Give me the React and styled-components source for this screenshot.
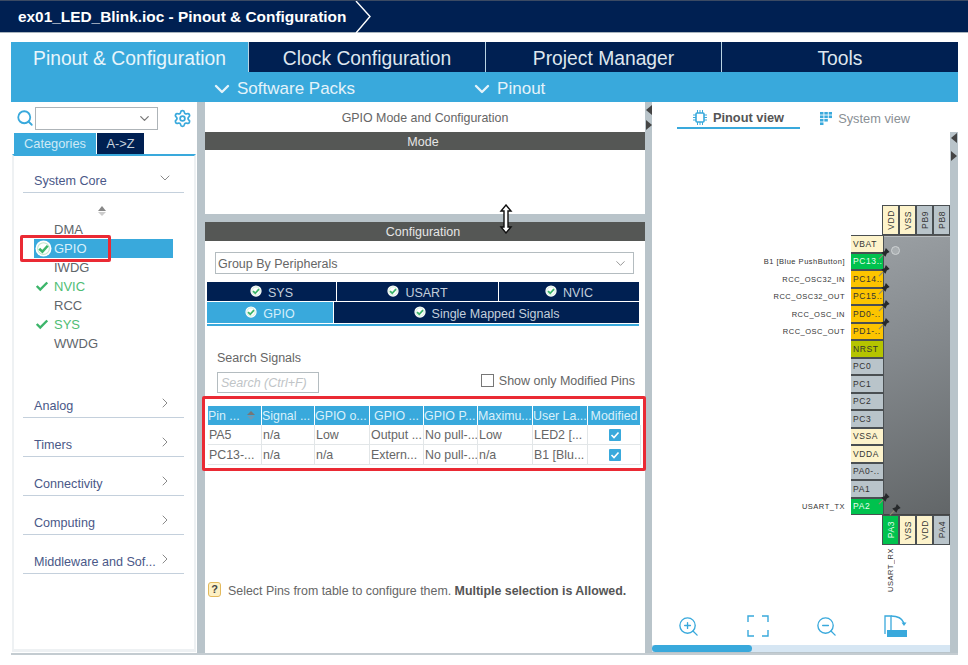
import * as React from 'react'
import styled, { createGlobalStyle } from 'styled-components'
import { ChevronDown, ChevronRight, Search, Settings, ZoomIn, ZoomOut } from 'lucide-react'

const Global = createGlobalStyle`
  html, body { margin: 0; padding: 0; background: #fff; }
  * { box-sizing: border-box; }
`

const NAVY = '#002052'
const BLUE = '#39a9dc'
const SASH = '#b9c4ca'
const GREY_TEXT = '#5f666b'

const Page = styled.div`
  position: relative;
  width: 968px;
  height: 665px;
  overflow: hidden;
  background: #fff;
  font-family: 'Liberation Sans', Arial, sans-serif;
`

const TitleBar = styled.div`
  display: flex;
  align-items: center;
  height: 33px;
  padding-left: 18px;
  background: ${NAVY};
  border-top: 1px solid #3b4a63;
  border-bottom: 1px solid #a9b4bd;
  color: #fff;
  font-size: 15.4px;
  font-weight: 700;
`

const TitleArrow = styled.svg`
  margin-left: 9px;
  width: 18px;
  height: 32px;
  flex: none;
`

const Workspace = styled.div`
  padding: 9px 10px 0 11px;
`

const MainTabs = styled.div`
  display: grid;
  grid-template-columns: 237px 237px 236px 237px;
  height: 30px;
  background: ${BLUE};
`

const MainTab = styled.div`
  display: flex;
  align-items: center;
  justify-content: center;
  padding-top: 3px;
  background: ${(p) => (p.$active ? BLUE : NAVY)};
  border-left: ${(p) => (p.$active ? '0' : `1px solid #b9d3e2`)};
  color: ${(p) => (p.$active ? '#e8f5fb' : '#dfe6ee')};
  font-size: 19.3px;
`

const SubBar = styled.div`
  display: flex;
  align-items: center;
  height: 30px;
  padding: 4px 0 0 199px;
  background: ${BLUE};
  color: #e4f3fa;
  font-size: 17px;
`

const SubItem = styled.div`
  display: flex;
  align-items: center;
  gap: 3px;
  margin-right: ${(p) => p.$gap || 0}px;
`

const Columns = styled.div`
  display: grid;
  grid-template-columns: 186px 8px 440px 7px 298px 8px;
  height: 551px;
`

const Sash = styled.div`
  position: relative;
  margin-top: ${(p) => p.$inset || 0}px;
  background: ${SASH};
`

const SashArrow = styled.span`
  position: absolute;
  left: 1px;
  top: ${(p) => p.$top}px;
  width: 0;
  height: 0;
  border-top: 5px solid transparent;
  border-bottom: 5px solid transparent;
  ${(p) => (p.$right ? 'border-left: 6px solid #444;' : 'border-right: 6px solid #444;')}
`

const Left = styled.div`
  display: flex;
  flex-direction: column;
  height: 551px;
`

const FilterRow = styled.div`
  display: flex;
  align-items: center;
  height: 31px;
  padding: 1px 0 0 5px;
  color: ${BLUE};
`

const FilterBox = styled.div`
  display: flex;
  align-items: center;
  justify-content: flex-end;
  width: 123px;
  height: 23px;
  margin: 0 15px 0 1px;
  padding-right: 5px;
  border: 1px solid #aeb4b8;
  color: #777;
`

const CatTabs = styled.div`
  display: flex;
  height: 21px;
  padding-left: 3px;
  gap: 1px;
`

const CatTab = styled.div`
  display: flex;
  align-items: center;
  justify-content: center;
  width: ${(p) => p.$w}px;
  background: ${(p) => (p.$active ? BLUE : NAVY)};
  color: ${(p) => (p.$active ? '#cfeaf6' : '#c8d2de')};
  font-size: 12.8px;
`

const CatPanel = styled.div`
  flex: 1;
  margin: 0 3px 1px 1px;
  padding: 0 10px 0 9px;
  border-top: 2px solid ${BLUE};
  border-left: 2px solid #eef1f3;
  border-right: 2px solid #eef1f3;
  border-bottom: 3px solid #eef1f3;
  width: 184px;
`

const Category = styled.div`
  display: flex;
  align-items: center;
  justify-content: space-between;
  height: 20px;
  margin-top: ${(p) => p.$top}px;
  padding: 0 11px 4px 11px;
  width: 161px;
  border-bottom: 1px solid #c4d0dc;
  color: #4a5888;
  font-size: 12.6px;
  white-space: nowrap;

  svg { color: #777; transform: translateY(-3px); flex: none; }
`

const ScrollMark = styled.div`
  display: flex;
  flex-direction: column;
  align-items: center;
  gap: 1px;
  width: 158px;
  margin-top: 13px;
  height: 12px;

  &::before, &::after {
    content: '';
    width: 0;
    height: 0;
    border-left: 4px solid transparent;
    border-right: 4px solid transparent;
  }
  &::before { border-bottom: 5px solid #888; }
  &::after { border-top: 4px solid #ccc; }
`

const PeriphList = styled.div`
  margin: 2px 0 45px 11px;
`

const Periph = styled.div`
  position: relative;
  display: flex;
  align-items: center;
  height: 19px;
  width: 139px;
  padding-left: 20px;
  background: ${(p) => (p.$selected ? BLUE : 'transparent')};
  color: ${(p) => (p.$selected ? '#d8f0fa' : p.$ok ? '#4fbd74' : GREY_TEXT)};
  font-size: 13px;
`

const PeriphCheck = styled.svg`
  position: absolute;
  left: 1px;
  top: 2px;
  width: 14px;
  height: 14px;
`

const PeriphDisc = styled.svg`
  position: absolute;
  left: 1px;
  top: 1px;
  width: 17px;
  height: 17px;
`

const Middle = styled.div`
  display: flex;
  flex-direction: column;
  height: 551px;
`

const MidTitle = styled.div`
  display: flex;
  align-items: center;
  justify-content: center;
  height: 30px;
  padding-top: 2px;
  color: #666;
  font-size: 12.4px;
`

const SectionBar = styled.div`
  display: flex;
  align-items: center;
  justify-content: center;
  height: ${(p) => p.$h}px;
  padding: 1px 4px 0 0;
  background: #555755;
  color: #e6e6e6;
  font-size: 12.5px;
`

const ModeBody = styled.div`
  height: 64px;
`

const Gap = styled.div`
  height: 8px;
  background: ${SASH};
`

const ConfigBody = styled.div`
  flex: 1;
  padding: 11px 0 0 0;
`

const GroupSelect = styled.div`
  display: flex;
  align-items: center;
  justify-content: space-between;
  height: 22px;
  width: 419px;
  margin-left: 10px;
  padding: 1px 5px 0 2px;
  border: 1px solid #b4bcc0;
  color: #666;
  font-size: 12.5px;

  svg { color: #888; }
`

const PeriphTabs = styled.div`
  margin: 8px 0 0 2px;
  width: 432px;
  border-bottom: 2px solid ${BLUE};
`

const PeriphTabRow = styled.div`
  display: grid;
  grid-template-columns: ${(p) => p.$cols};
  gap: 1px;
  height: ${(p) => p.$h}px;
  margin-bottom: 1px;
`

const PeriphTab = styled.div`
  display: flex;
  align-items: center;
  justify-content: center;
  gap: 6px;
  padding-top: 3px;
  background: ${(p) => (p.$active ? BLUE : NAVY)};
  color: ${(p) => (p.$active ? '#d4eefa' : '#c3cfdc')};
  font-size: 12.5px;
`

const TabCheck = styled.svg`
  width: 12px;
  height: 12px;
  margin-top: -5px;
`

const SearchSignals = styled.div`
  margin: 25px 0 0 12px;
  color: #666;
  font-size: 12.5px;
`

const SearchLine = styled.div`
  display: flex;
  align-items: center;
  justify-content: space-between;
  margin: 7px 10px 0 12px;
  height: 21px;
`

const SearchInput = styled.div`
  display: flex;
  align-items: center;
  width: 102px;
  height: 21px;
  padding: 1px 0 0 3px;
  border: 1px solid #b4bcc0;
  color: #c0c4c7;
  font-size: 12.5px;
  font-style: italic;
`

const ModifiedToggle = styled.label`
  display: flex;
  align-items: center;
  gap: 5px;
  margin-top: -4px;
  color: #666;
  font-size: 12.5px;
`

const CheckBox = styled.span`
  width: 13px;
  height: 13px;
  border: 1px solid #777;
  background: #fff;
`

const Table = styled.div`
  margin: 13px 0 0 3px;
  width: 433px;
`

const TableRow = styled.div`
  display: grid;
  grid-template-columns: 54px 53px 55px 54px 54px 55px 55px 53px;
  height: ${(p) => p.$h}px;
  border-bottom: ${(p) => (p.$head ? '0' : '1px solid #e2e6e8')};
`

const HeadCell = styled.div`
  display: flex;
  align-items: center;
  justify-content: ${(p) => (p.$center ? 'center' : 'flex-start')};
  margin-right: 1px;
  padding: 0;
  overflow: hidden;
  background: ${BLUE};
  color: #d8f0fa;
  font-size: 12.4px;
  white-space: nowrap;
`

const Cell = styled.div`
  display: flex;
  align-items: center;
  justify-content: ${(p) => (p.$center ? 'center' : 'flex-start')};
  padding: 1px 0 0 1px;
  border-right: 1px solid #e2e6e8;
  color: #666;
  font-size: 12.4px;
  white-space: nowrap;
  overflow: hidden;
`

const SortMark = styled.span`
  display: inline-flex;
  flex-direction: column;
  gap: 1px;
  margin-left: 7px;

  &::before, &::after {
    content: '';
    width: 0;
    height: 0;
    border-left: 4px solid transparent;
    border-right: 4px solid transparent;
  }
  &::before { border-bottom: 4px solid #777; }
  &::after { border-top: 4px solid #6c9ab5; }
`

const TickBox = styled.span`
  display: flex;
  align-items: center;
  justify-content: center;
  width: 12px;
  height: 12px;
  background: ${BLUE};
  border-radius: 1px;
`

const Hint = styled.div`
  display: flex;
  align-items: center;
  gap: 7px;
  margin: 119px 0 0 3px;
  color: #666;
  font-size: 12.4px;

  b { color: #555; }
`

const HintIcon = styled.span`
  display: flex;
  align-items: center;
  justify-content: center;
  width: 13px;
  height: 15px;
  margin-top: -4px;
  border: 1px solid #e3b95c;
  border-radius: 3px;
  background: #fdf0c4;
  color: #444;
  font-size: 11px;
  font-weight: 700;
`

const Right = styled.div`
  display: flex;
  flex-direction: column;
  height: 551px;
`

const ViewTabs = styled.div`
  display: flex;
  align-items: flex-start;
  height: 31px;
  padding: 8px 0 0 25px;
`

const ViewTab = styled.div`
  display: flex;
  align-items: center;
  justify-content: center;
  gap: 6px;
  width: ${(p) => p.$w}px;
  height: 19px;
  padding-bottom: 2px;
  margin-right: ${(p) => p.$gap || 0}px;
  border-bottom: ${(p) => (p.$active ? `2px solid ${BLUE}` : '0')};
  color: ${(p) => (p.$active ? '#555' : '#8a9095')};
  font-size: 12.8px;
  font-weight: ${(p) => (p.$active ? 700 : 400)};
  white-space: nowrap;
`

const Canvas = styled.div`
  flex: 1;
  display: flex;
  flex-direction: column;
  align-items: flex-end;
  padding-top: 72px;
`

const ChipGrid = styled.div`
  display: grid;
  grid-template-columns: 30px 69px;
  grid-template-rows: 30px 280px 30px;
`

const TopPins = styled.div`
  grid-column: 2;
  grid-row: 1;
  display: grid;
  grid-template-columns: repeat(4, 1fr);
  padding-left: 1px;
`

const BottomPins = styled(TopPins)`
  grid-row: 3;
  position: relative;
  z-index: 1;
`

const SidePins = styled.div`
  grid-column: 1;
  grid-row: 2;
  position: relative;
  z-index: 1;
  display: grid;
  grid-auto-rows: 17.5px;
`

const Pin = styled.div`
  position: relative;
  display: flex;
  align-items: center;
  justify-content: ${(p) => (p.$vertical ? 'center' : 'flex-start')};
  padding-left: ${(p) => (p.$vertical ? 0 : 2)}px;
  background: ${(p) => p.$bg};
  border: 1px solid #4a4f52;
  border-width: ${(p) => (p.$vertical ? '1px' : '1px 1px 1px 0')};
  color: ${(p) => (p.$light ? '#e8fff0' : '#333')};
  font-size: 8.5px;
  letter-spacing: 0.6px;
  white-space: nowrap;
`

const VerticalText = styled.span`
  writing-mode: vertical-rl;
  transform: rotate(180deg);
`

const PinLabel = styled.span`
  position: absolute;
  right: calc(100% + 6px);
  top: 50%;
  transform: translateY(-50%);
  color: #333;
  font-size: 7.5px;
  letter-spacing: 0.5px;
  white-space: nowrap;
`

const PinLabelVertical = styled.span`
  position: absolute;
  left: 50%;
  top: calc(100% + 4px);
  margin-left: -5px;
  writing-mode: vertical-rl;
  transform: rotate(180deg);
  color: #333;
  font-size: 7.5px;
  letter-spacing: 0.5px;
  white-space: nowrap;
`

const ChipBody = styled.div`
  position: relative;
  grid-column: 2;
  grid-row: 2;
  background: linear-gradient(160deg, #9a9fa3 0%, #84898d 40%, #626668 100%);
  border-top: 1px solid #555;
  border-left: 1px solid #555;
  border-bottom: 1px solid #444;
  box-shadow: inset 1px 1px 0 #b9bec1;
`

const ChipDot = styled.span`
  position: absolute;
  left: 9px;
  top: 10px;
  width: 9px;
  height: 9px;
  border-radius: 50%;
  background: #a9aeb1;
  border: 1px solid #cfd3d5;
`

const PinMark = styled.svg`
  position: absolute;
  width: 13px;
  height: 13px;
  z-index: 2;
  ${(p) => (p.$bottom ? 'left: 6px; top: -13px;' : 'right: -8px; top: -7px;')}
`

const CanvasTools = styled.div`
  display: grid;
  grid-template-columns: 69px 69px 69px 69px;
  width: 100%;
  margin-top: auto;
  padding: 0 0 7px 2px;
  height: 31px;
  color: ${BLUE};
  justify-items: center;
  align-items: center;
`

const HScroll = styled.div`
  height: 8px;
  background: #d6e6f3;
  border-bottom: 1px solid ${SASH};
`

const HThumb = styled.div`
  width: 100px;
  height: 7px;
  border-radius: 4px;
  background: ${BLUE};
`

const BottomLine = styled.div`
  height: 2px;
  width: 947px;
  background: #c4ccd1;
`

const RedBox = styled.div`
  position: absolute;
  left: ${(p) => p.$x}px;
  top: ${(p) => p.$y}px;
  width: ${(p) => p.$w}px;
  height: ${(p) => p.$h}px;
  border: 3px solid #ea2a34;
  border-radius: 2px;
  pointer-events: none;
`

const ResizeCursor = styled.svg`
  position: absolute;
  left: 499px;
  top: 204px;
  width: 14px;
  height: 30px;
`

const CheckDisc = ({ as: As = TabCheck }) => (
  <As viewBox="0 0 16 16">
    <circle cx="8" cy="8" r="7.5" fill="#fff" />
    <circle cx="8" cy="8" r="5.5" fill="#fff" stroke="#bfe6cc" />
    <path d="M4 8.2l3 2.8 5-5.6" fill="none" stroke="#3cb56a" strokeWidth="2.4" />
  </As>
)

const PlainCheck = () => (
  <PeriphCheck viewBox="0 0 16 16">
    <path d="M2 8l4 4 8-8" fill="none" stroke="#3cb56a" strokeWidth="2.8" />
  </PeriphCheck>
)

const Tick = () => (
  <svg width="10" height="10" viewBox="0 0 10 10">
    <path d="M1.5 5l2.5 2.5 4.5-5" fill="none" stroke="#fff" strokeWidth="1.6" />
  </svg>
)

const Pushpin = ({ bottom }) => (
  <PinMark viewBox="0 0 14 14" $bottom={bottom}>
    <path d="M1 13l5-5" stroke="#8f8a70" strokeWidth="1.3" />
    <path d="M3.500 6l4.500 4.500 1.500-3.500 3-1.500L8.500 1 7 4.500z" fill="#26292b" />
  </PinMark>
)

const FitIcon = () => (
  <svg width="22" height="22" viewBox="0 0 22 22" fill="none" stroke="currentColor" strokeWidth="1.4">
    <path d="M1 7V1h6M15 1h6v6M21 15v6h-6M7 21H1v-6" />
  </svg>
)

const RotateIcon = () => (
  <svg width="24" height="23" viewBox="0 0 24 23" fill="none" stroke="currentColor" strokeWidth="1.3">
    <path d="M1 19V1h6v14" />
    <path d="M7 1c6 0 11 2 13 7" />
    <path d="M17.500 7.500h5L20 11z" fill="currentColor" stroke="none" />
    <rect x="3" y="15" width="20" height="7" fill="currentColor" stroke="none" />
  </svg>
)

const PinoutIcon = () => (
  <svg width="14" height="15" viewBox="0 0 14 15" fill="none" stroke={BLUE}>
    <rect x="3" y="3" width="8" height="9" rx="1" strokeWidth="1.6" />
    <path d="M4.500 0v3M7 0v3M9.500 0v3M4.500 12v3M7 12v3M9.500 12v3M0 5h3M0 7.500h3M0 10h3M11 5h3M11 7.500h3M11 10h3" strokeWidth="1" />
  </svg>
)

const SystemIcon = () => (
  <svg width="14" height="15" viewBox="0 0 14 15" fill={BLUE}>
    {[0, 5, 10].map((x) =>
      [0, 4, 8, 12].filter((y) => !(x > 0 && y > 4 + (x === 5 ? 4 : 0))).map((y) => (
        <rect key={`${x}-${y}`} x={x} y={y} width="4" height="3" />
      ))
    )}
  </svg>
)

const sidePins = [
  { name: 'VBAT', bg: '#fdf3cb' },
  { name: 'PC13..', bg: '#00c24e', light: true, label: 'B1 [Blue PushButton]', mark: true },
  { name: 'PC14..', bg: '#fcc400', label: 'RCC_OSC32_IN', mark: true },
  { name: 'PC15..', bg: '#fcc400', label: 'RCC_OSC32_OUT', mark: true },
  { name: 'PD0-..', bg: '#fcc400', label: 'RCC_OSC_IN', mark: true },
  { name: 'PD1-..', bg: '#fcc400', label: 'RCC_OSC_OUT', mark: true },
  { name: 'NRST', bg: '#b5c400' },
  { name: 'PC0', bg: SASH },
  { name: 'PC1', bg: SASH },
  { name: 'PC2', bg: SASH },
  { name: 'PC3', bg: SASH },
  { name: 'VSSA', bg: '#fdf3cb' },
  { name: 'VDDA', bg: '#fdf3cb' },
  { name: 'PA0-..', bg: SASH },
  { name: 'PA1', bg: SASH },
  { name: 'PA2', bg: '#00c24e', light: true, label: 'USART_TX', mark: true },
]

const peripherals = [
  { name: 'DMA' },
  { name: 'GPIO', selected: true },
  { name: 'IWDG' },
  { name: 'NVIC', ok: true },
  { name: 'RCC' },
  { name: 'SYS', ok: true },
  { name: 'WWDG' },
]

const tableHead = ['Signal ...', 'GPIO o...', 'GPIO ...', 'GPIO P...', 'Maximu...', 'User La...', 'Modified']

const tableRows = [
  ['PA5', 'n/a', 'Low', 'Output ...', 'No pull-...', 'Low', 'LED2 [...'],
  ['PC13-...', 'n/a', 'n/a', 'Extern...', 'No pull-...', 'n/a', 'B1 [Blu...'],
]

const collapsed = ['Analog', 'Timers', 'Connectivity', 'Computing', 'Middleware and Sof...']

export default function App() {
  return (
    <Page>
      <Global />
      <TitleBar>
        ex01_LED_Blink.ioc - Pinout &amp; Configuration
        <TitleArrow viewBox="0 0 18 32" fill="none" stroke="#fff" strokeWidth="1.4">
          <path d="M1 0l14 15.500L1 32" />
        </TitleArrow>
      </TitleBar>
      <Workspace>
        <MainTabs>
          <MainTab $active>Pinout &amp; Configuration</MainTab>
          <MainTab>Clock Configuration</MainTab>
          <MainTab>Project Manager</MainTab>
          <MainTab>Tools</MainTab>
        </MainTabs>
        <SubBar>
          <SubItem $gap={115}>
            <ChevronDown size={24} strokeWidth={2.4} />
            Software Packs
          </SubItem>
          <SubItem>
            <ChevronDown size={24} strokeWidth={2.4} />
            Pinout
          </SubItem>
        </SubBar>
        <Columns>
          <Left>
            <FilterRow>
              <Search size={18} strokeWidth={2.4} />
              <FilterBox>
                <ChevronDown size={15} />
              </FilterBox>
              <Settings size={19} strokeWidth={2.2} />
            </FilterRow>
            <CatTabs>
              <CatTab $active $w={82}>Categories</CatTab>
              <CatTab $w={47}>A-&gt;Z</CatTab>
            </CatTabs>
            <CatPanel>
              <Category $top={17}>
                System Core
                <ChevronDown size={16} strokeWidth={1.3} />
              </Category>
              <ScrollMark />
              <PeriphList>
                {peripherals.map((p) => (
                  <Periph key={p.name} $selected={p.selected} $ok={p.ok}>
                    {p.selected && <CheckDisc as={PeriphDisc} />}
                    {p.ok && <PlainCheck />}
                    {p.name}
                  </Periph>
                ))}
              </PeriphList>
              {collapsed.map((name) => (
                <Category key={name} $top={19}>
                  {name}
                  <ChevronRight size={16} strokeWidth={1.3} />
                </Category>
              ))}
            </CatPanel>
          </Left>
          <Sash />
          <Middle>
            <MidTitle>GPIO Mode and Configuration</MidTitle>
            <SectionBar $h={18}>Mode</SectionBar>
            <ModeBody />
            <Gap />
            <SectionBar $h={19}>Configuration</SectionBar>
            <ConfigBody>
              <GroupSelect>
                Group By Peripherals
                <ChevronDown size={15} strokeWidth={1.4} />
              </GroupSelect>
              <PeriphTabs>
                <PeriphTabRow $cols="129px 161px 1fr" $h={19}>
                  <PeriphTab><CheckDisc />SYS</PeriphTab>
                  <PeriphTab><CheckDisc />USART</PeriphTab>
                  <PeriphTab><CheckDisc />NVIC</PeriphTab>
                </PeriphTabRow>
                <PeriphTabRow $cols="126px 1fr" $h={21}>
                  <PeriphTab $active><CheckDisc />GPIO</PeriphTab>
                  <PeriphTab><CheckDisc />Single Mapped Signals</PeriphTab>
                </PeriphTabRow>
              </PeriphTabs>
              <SearchSignals>Search Signals</SearchSignals>
              <SearchLine>
                <SearchInput>Search (Ctrl+F)</SearchInput>
                <ModifiedToggle>
                  <CheckBox />
                  Show only Modified Pins
                </ModifiedToggle>
              </SearchLine>
              <Table>
                <TableRow $head $h={19}>
                  <HeadCell>Pin ...<SortMark /></HeadCell>
                  {tableHead.map((h, i) => (
                    <HeadCell key={h} $center={i === 2 || i === 6}>{h}</HeadCell>
                  ))}
                </TableRow>
                {tableRows.map((row) => (
                  <TableRow key={row[0]} $h={20}>
                    {row.map((c, i) => <Cell key={i}>{c}</Cell>)}
                    <Cell $center><TickBox><Tick /></TickBox></Cell>
                  </TableRow>
                ))}
              </Table>
              <Hint>
                <HintIcon>?</HintIcon>
                <span>Select Pins from table to configure them. <b>Multiple selection is Allowed.</b></span>
              </Hint>
            </ConfigBody>
          </Middle>
          <Sash>
            <SashArrow $top={3} />
            <SashArrow $top={18} $right />
          </Sash>
          <Right>
            <ViewTabs>
              <ViewTab $active $w={123} $gap={20}><PinoutIcon />Pinout view</ViewTab>
              <ViewTab $w={90}><SystemIcon />System view</ViewTab>
            </ViewTabs>
            <Canvas>
              <ChipGrid>
                <TopPins>
                  {[['VDD', '#fdf3cb'], ['VSS', '#fdf3cb'], ['PB9', SASH], ['PB8', SASH]].map(([n, bg]) => (
                    <Pin key={n} $vertical $bg={bg}><VerticalText>{n}</VerticalText></Pin>
                  ))}
                </TopPins>
                <SidePins>
                  {sidePins.map((p) => (
                    <Pin key={p.name} $bg={p.bg} $light={p.light}>
                      {p.name}
                      {p.label && <PinLabel>{p.label}</PinLabel>}
                      {p.mark && <Pushpin />}
                    </Pin>
                  ))}
                </SidePins>
                <ChipBody><ChipDot /></ChipBody>
                <BottomPins>
                  <Pin $vertical $bg="#00c24e" $light>
                    <VerticalText>PA3</VerticalText>
                    <PinLabelVertical>USART_RX</PinLabelVertical>
                    <Pushpin bottom />
                  </Pin>
                  <Pin $vertical $bg="#fdf3cb"><VerticalText>VSS</VerticalText></Pin>
                  <Pin $vertical $bg="#fdf3cb"><VerticalText>VDD</VerticalText></Pin>
                  <Pin $vertical $bg={SASH}><VerticalText>PA4</VerticalText></Pin>
                </BottomPins>
              </ChipGrid>
              <CanvasTools>
                <ZoomIn size={23} strokeWidth={1.4} />
                <FitIcon />
                <ZoomOut size={23} strokeWidth={1.4} />
                <RotateIcon />
              </CanvasTools>
            </Canvas>
            <HScroll><HThumb /></HScroll>
          </Right>
          <Sash $inset={30}>
            <SashArrow $top={1} />
            <SashArrow $top={19} $right />
          </Sash>
        </Columns>
        <BottomLine />
      </Workspace>
      <RedBox $x={20} $y={235} $w={91} $h={27} />
      <RedBox $x={202} $y={396} $w={444} $h={75} />
      <ResizeCursor viewBox="0 0 14 30" fill="#fff" stroke="#111" strokeWidth="1.4">
        <path d="M7 1l5 6H9v16h3l-5 6-5-6h3V7H2z" />
      </ResizeCursor>
    </Page>
  )
}
